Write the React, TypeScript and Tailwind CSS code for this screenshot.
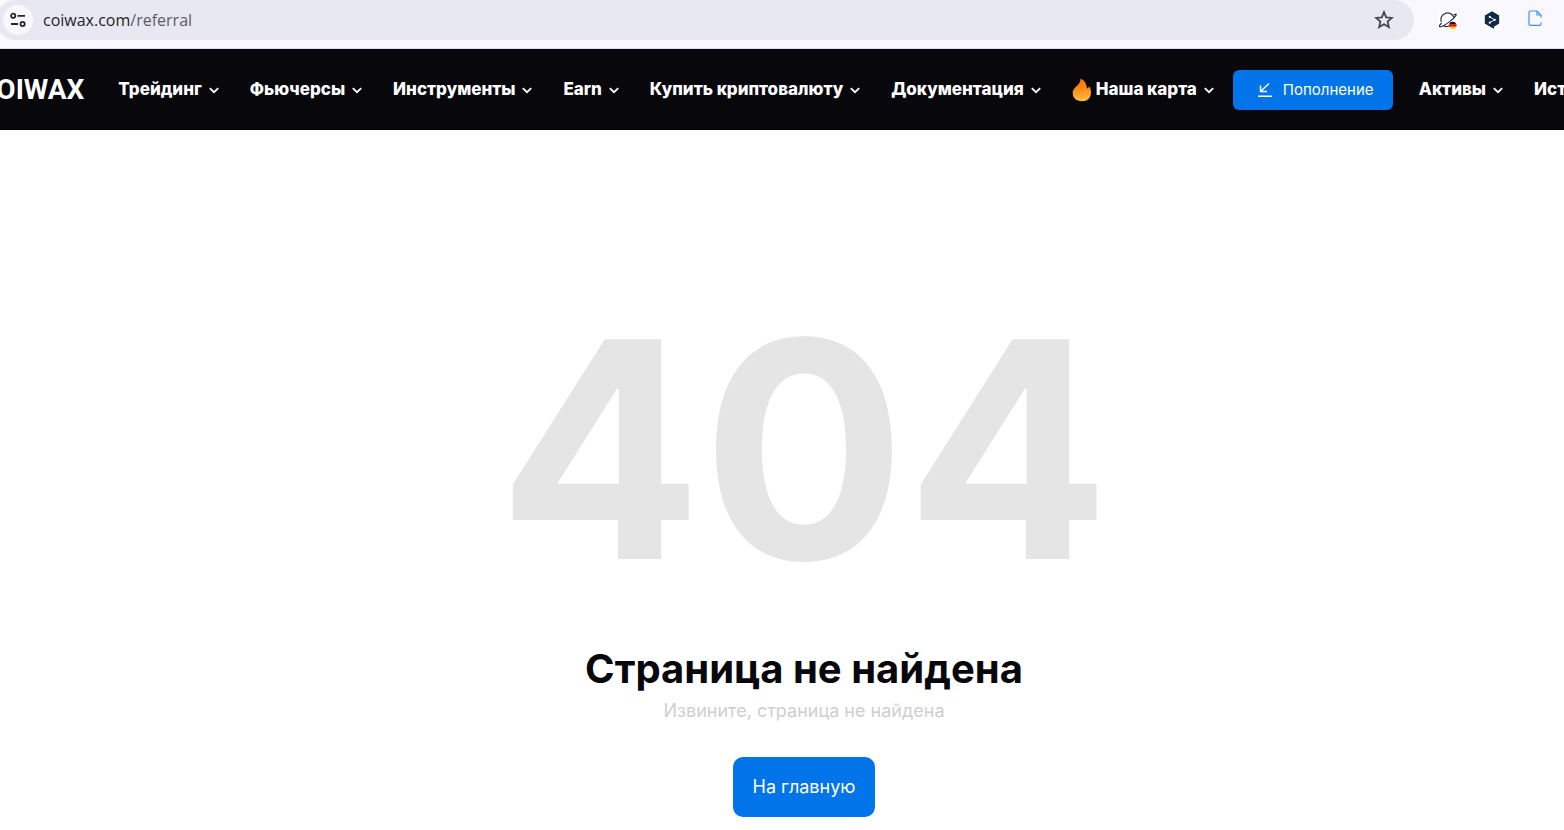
import type { ReactNode } from 'react'

const LEFT_MENU = ['Трейдинг', 'Фьючерсы', 'Инструменты', 'Earn', 'Купить криптовалюту', 'Документация']

function Chevron() {
  return (
    <svg width="12" height="12" viewBox="0 0 12 12" fill="none" stroke="currentColor" strokeWidth="1.8">
      <path d="M1.8 4.2 6 8.2l4.2-4" />
    </svg>
  )
}

function MenuItem({ children }: { children: ReactNode }) {
  return (
    <button type="button" className="flex shrink-0 items-center gap-1.5 text-[17px] font-extrabold whitespace-nowrap text-white">
      {children}
      <Chevron />
    </button>
  )
}

function Fire() {
  return (
    <svg width="20" height="24" viewBox="0 0 20 24">
      <defs>
        <linearGradient id="fire" x1="0" y1="0" x2="0" y2="1">
          <stop offset="0" stopColor="#ff6d00" />
          <stop offset="0.5" stopColor="#ff8f1a" />
          <stop offset="1" stopColor="#ffc04a" />
        </linearGradient>
      </defs>
      <path
        fill="url(#fire)"
        d="M8.5.6c0 3-1.300 5-3.200 7-1.500 1.600-4.600 3.800-4.600 7.400 0 5 3.800 8.200 9.200 8.200s9.100-3.300 9.100-8.500c0-2.800-.7-4.800-1.600-6.500-.4 1-1.100 1.800-2.100 2.300-.4 0-.5-.6-.5-1.400C14.500 5.500 12.300 2.500 8.500.6Z"
      />
    </svg>
  )
}

function BrowserBar() {
  return (
    <div className="flex h-12 items-start bg-[#f9f8ff]">
      <div className="-ml-1 flex h-10 flex-1 items-center rounded-full bg-[#e8e8f2] pr-5 pl-1.75">
        <button type="button" aria-label="Сведения о сайте" className="flex size-7.5 items-center justify-center rounded-full bg-[#f9f8ff]">
          <svg width="16" height="16" viewBox="0 0 16 16" fill="none" stroke="#26262c" strokeWidth="1.8">
            <circle cx="3.2" cy="3.8" r="2.1" />
            <path d="M7.5 3.8H15M1 12h7" />
            <circle cx="12.6" cy="12" r="2.1" />
          </svg>
        </button>
        <p className="flex-1 pl-2.5 font-['Open_Sans',sans-serif] text-base text-[#1f1f26]">
          coiwax.com<span className="text-[#5a5a66]">/referral</span>
        </p>
        <button type="button" aria-label="Добавить в закладки">
          <svg width="20" height="20" viewBox="0 0 20 20" fill="none" stroke="#45464d" strokeWidth="1.8">
            <path d="m10 2.2 2.2 5.2 5.7.5-4.3 3.7 1.3 5.5-4.9-2.9-4.9 2.900 1.300-5.500L2.100 7.900l5.700-.5Z" />
          </svg>
        </button>
      </div>
      <div className="flex h-10 items-center gap-6 pr-4.5 pl-6">
        <button type="button" aria-label="Прокси">
          <svg width="20" height="20" viewBox="0 0 20 20" fill="none">
            <rect width="20" height="20" rx="3" fill="#fff" />
            <path d="M3.2 12A6.6 6.6 0 1 1 16 7.5M5 15.5a6.6 6.6 0 0 0 6 .8" stroke="#26374f" strokeWidth="1.2" />
            <path d="M3.5 13C1.2 15.5.8 16.8 2.2 16.8 5.5 16.6 17 8.5 18.2 4.8c.2-1-1.200-.6-2.700.2" stroke="#26374f" strokeWidth="1.2" />
            <path d="M11 14.200a4 4 0 0 1 7.400 0Z" fill="#111" />
            <path d="M11 14.200h7.400a4 4 0 0 1 0 2.600H11a4 4 0 0 1 0-2.600Z" fill="#e3000f" />
            <path d="M11 16.800a4 4 0 0 0 7.400 0Z" fill="#ffce00" />
          </svg>
        </button>
        <button type="button" aria-label="Переводчик">
          <svg width="20" height="20" viewBox="0 0 20 20" fill="none">
            <rect width="20" height="20" rx="3" fill="#fff" />
            <path d="m10 1.200 7.200 4.200v8.200L12 16.700v2L9 17.200l-6.200-3.600V5.400Z" fill="#0f2b46" />
            <path d="m7.800 7 5 2.800-5 2.800" stroke="#fff" strokeWidth="0.9" />
            <circle cx="7.8" cy="6.9" r="1.1" fill="#fff" />
            <circle cx="12.8" cy="9.8" r="1.1" fill="#fff" />
            <circle cx="7.8" cy="12.7" r="1.1" fill="#fff" />
          </svg>
        </button>
        <button type="button" aria-label="Документ">
          <svg width="20" height="20" viewBox="0 0 20 20" fill="none" stroke="#4a90e2" strokeWidth="1.2">
            <path d="M15 12.500V14Q15 15.300 13.700 15.300H4.300Q3 15.300 3 14V2.300Q3 1 4.300 1H11l4 4v2.500" />
            <path d="M11 1v4h4" />
          </svg>
        </button>
      </div>
    </div>
  )
}

function Header() {
  return (
    <header className="flex h-20.5 items-center overflow-hidden border-t border-b border-t-[#dcdce6] border-b-black bg-[#07070c] pt-0.5">
      <a href="/" className="-ml-5.5 shrink-0 font-[Roboto,sans-serif] text-[28px] leading-8 font-bold text-white">
        COIWAX
      </a>
      <nav className="flex shrink-0 items-center gap-7.5 pl-8.5">
        {LEFT_MENU.map((item) => (
          <MenuItem key={item}>{item}</MenuItem>
        ))}
        <MenuItem>
          <span className="flex items-center gap-1">
            <Fire />
            Наша карта
          </span>
        </MenuItem>
      </nav>
      <button
        type="button"
        className="mr-6.5 ml-4.5 flex h-10 w-40 shrink-0 items-center gap-2.5 rounded-md bg-[#0074e8] pl-6 text-[15px] text-white"
      >
        <svg width="16" height="16" viewBox="0 0 16 16" fill="none" stroke="currentColor" strokeWidth="1.5">
          <path d="M12 1.500 4 9M3.500 3.500V9.500H10M1 14.200h14" />
        </svg>
        Пополнение
      </button>
      <div className="flex shrink-0 gap-7.5">
        <MenuItem>Активы</MenuItem>
        <MenuItem>История</MenuItem>
      </div>
    </header>
  )
}

export default function App() {
  return (
    <div className="min-h-screen overflow-hidden bg-white font-[Inter,sans-serif]">
      <BrowserBar />
      <Header />
      <main className="flex flex-col items-center pt-34.75 pl-11">
        <p className="text-[302px] leading-[360px] font-bold text-[#e5e5e5]">404</p>
        <h1 className="pt-4 text-[40px] leading-12 font-bold text-[#07070c]">Страница не найдена</h1>
        <p className="pt-1 text-lg text-[#cfcfcf]">Извините, страница не найдена</p>
        <a href="/" className="mt-8 flex h-15 items-center rounded-[10px] bg-[#0074e8] px-5 text-lg text-white">
          На главную
        </a>
      </main>
    </div>
  )
}
